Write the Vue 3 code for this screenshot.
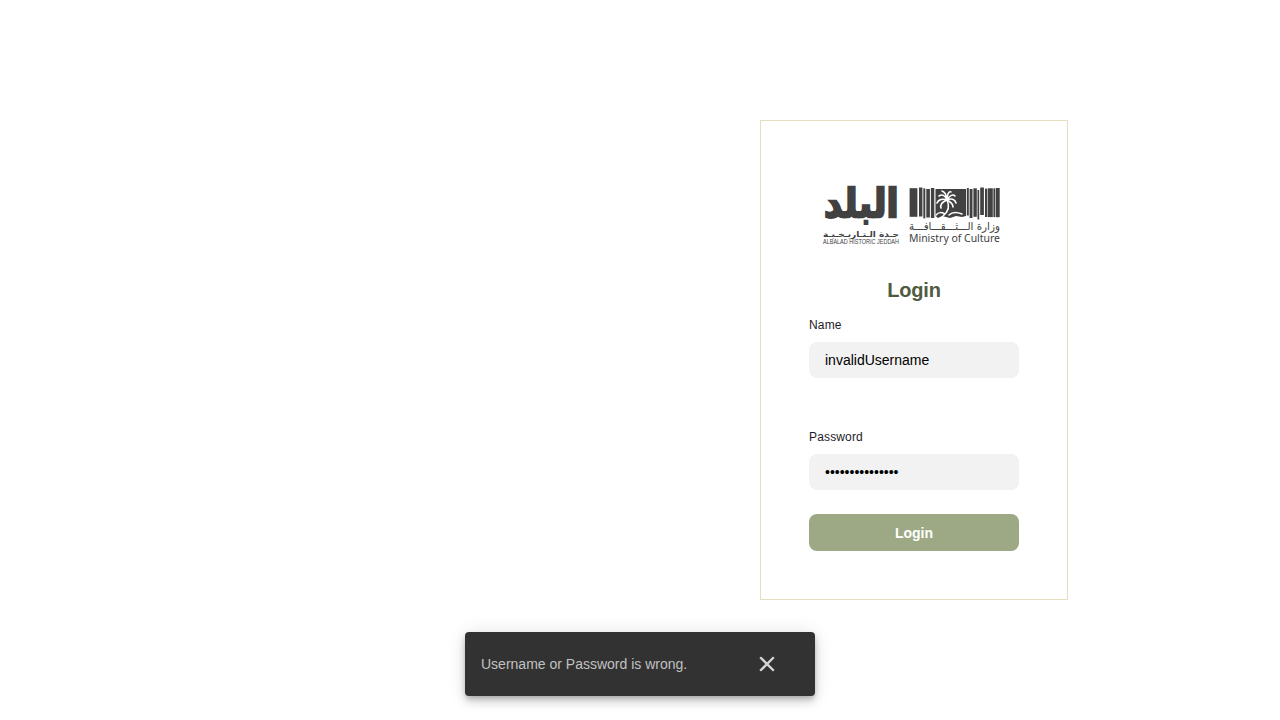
<script setup>
import { ref } from 'vue'

const username = ref('invalidUsername')
const password = ref('invalidPassword')
const showToast = ref(true)

const bars = [
  [0.6, 1.2, 7.8, 28.6], [10, 0.5, 3.4, 29], [14.3, 1.4, 2, 30], [17.3, 2, 3.6, 28.5], [21.9, 1, 3.4, 30],
  [57.8, 1, 2, 27.5], [60.6, 2, 2.9, 29], [64.4, 1.3, 3.4, 28.5], [68.5, 3, 1.7, 29.5], [71.2, 0.5, 3.7, 27.5],
  [76, 1.6, 2.4, 28.4], [79, 1.3, 4.8, 28.8], [84.4, 1.3, 2, 28.8], [87, 1, 3.7, 29.2]
]
</script>

<template>
  <main class="page">
    <form class="card" @submit.prevent>
      <svg class="logo" viewBox="0 0 190 70" aria-label="Albalad, Ministry of Culture">
        <g fill="#414142">
          <text class="mark" transform="translate(8 36.5) scale(1 1.15)" textLength="74.5" lengthAdjust="spacingAndGlyphs" direction="ltr">البلد</text>
          <text class="sub-ar" x="7" y="57" textLength="76" lengthAdjust="spacingAndGlyphs">جـدة الـتـاريـخـيـة</text>
          <text class="sub-en" x="7" y="64" textLength="76" lengthAdjust="spacingAndGlyphs">ALBALAD HISTORIC JEDDAH</text>
          <g transform="translate(93 7)">
            <rect v-for="(b, i) in bars" :key="i" :x="b[0]" :y="b[1]" :width="b[2]" :height="b[3]" />
            <path d="M26.5 2H57V29L53 30L47 29L41 31L33 29L29 31L26.5 29Z" />
            <g fill="none" stroke="#fff" stroke-linecap="round" transform="translate(-1 -1)">
              <path stroke-width="1.6" d="M39 14C37 9 34 8 31 10M39 14C38 8 37 6 34 5M39 14C39 8 41 5 43 6M39 14C42 9 45 8 47 10M39 14C43 12 47 13 48 17M39 14C34 12 30 14 29 17M39 14C34 16 32 19 33 22M39 14C43 16 45 19 45 21" />
              <path stroke-width="1.5" d="M39 14C42 20 41 25 35 30M41 29C44 26 49 26 54 28M37 28C33 26 31 26 28 29" />
            </g>
          </g>
          <text class="min-ar" x="93" y="50" textLength="91" lengthAdjust="spacingAndGlyphs">وزارة الـــثـــقـــافـــة</text>
          <text class="min-en" x="93" y="61.7" textLength="91" lengthAdjust="spacingAndGlyphs">Ministry of Culture</text>
        </g>
      </svg>
      <h1>Login</h1>
      <label for="name">Name</label>
      <input id="name" v-model="username" type="text">
      <label class="second" for="password">Password</label>
      <input id="password" v-model="password" type="password">
      <button class="submit" type="submit">Login</button>
    </form>
    <div v-if="showToast" class="toast" role="alert">
      <span>Username or Password is wrong.</span>
      <button type="button" aria-label="Close" @click="showToast = false">
        <svg width="16" height="16" viewBox="0 0 16 16"><path d="M1.2 1.2L14.8 14.8M14.8 1.2L1.2 14.8" stroke="#d6d6d6" stroke-width="2.3" /></svg>
      </button>
    </div>
  </main>
</template>

<style>
html, body { background: #fff; overflow: hidden; }
</style>

<style scoped>
.page {
  height: 720px;
  box-sizing: border-box;
  padding-top: 120px;
  display: flex;
  flex-direction: column;
  font-family: "Liberation Sans", Arial, sans-serif;
}
.card {
  box-sizing: border-box;
  width: 308px;
  height: 480px;
  margin-left: 760px;
  padding: 59px 48px 0;
  border: 1px solid #e6dec2;
  display: flex;
  flex-direction: column;
}
.logo { display: block; width: 190px; height: 70px; margin-left: 7px; flex: none; overflow: visible; }
.mark { font: bold 34px "DejaVu Sans", sans-serif; stroke: #414142; stroke-width: 2px; }
.sub-ar { font: bold 8px "DejaVu Sans", sans-serif; }
.sub-en { font: 6.6px "Liberation Sans", sans-serif; }
.min-ar { font: 11px "DejaVu Sans", sans-serif; }
.min-en { font: 10.7px "Noto Sans", sans-serif; }
h1 {
  margin: 28px 0 0;
  font-size: 20px;
  line-height: 24px;
  letter-spacing: -.2px;
  text-align: center;
  color: #4f5b3f;
}
label {
  margin-top: 15px;
  height: 16px;
  font-size: 12px;
  line-height: 16px;
  letter-spacing: .15px;
  color: #1c1c28;
}
.second { margin-top: 51px; }
input {
  box-sizing: border-box;
  width: 210px;
  height: 36px;
  margin: 9px 0 0;
  padding: 0 16px;
  border: 0;
  border-radius: 8px;
  background: #f2f2f2;
  color: #000;
  font: 14px "Liberation Sans", Arial, sans-serif;
}
.submit {
  height: 37px;
  margin-top: 24px;
  padding: 0;
  border: 0;
  border-radius: 8px;
  background: #9da884;
  color: #fff;
  font: bold 14px "Liberation Sans", Arial, sans-serif;
}
.toast {
  box-sizing: border-box;
  width: 350px;
  height: 64px;
  margin: 32px 0 0 465px;
  padding: 0 40px 0 16px;
  display: flex;
  align-items: center;
  justify-content: space-between;
  border-radius: 4px;
  background: #323232;
  color: #c1c1c1;
  font-size: 14px;
  box-shadow: 0 3px 5px -1px rgba(0, 0, 0, .2), 0 6px 10px rgba(0, 0, 0, .14), 0 1px 18px rgba(0, 0, 0, .12);
}
.toast button { display: flex; padding: 0; border: 0; background: none; }
</style>
